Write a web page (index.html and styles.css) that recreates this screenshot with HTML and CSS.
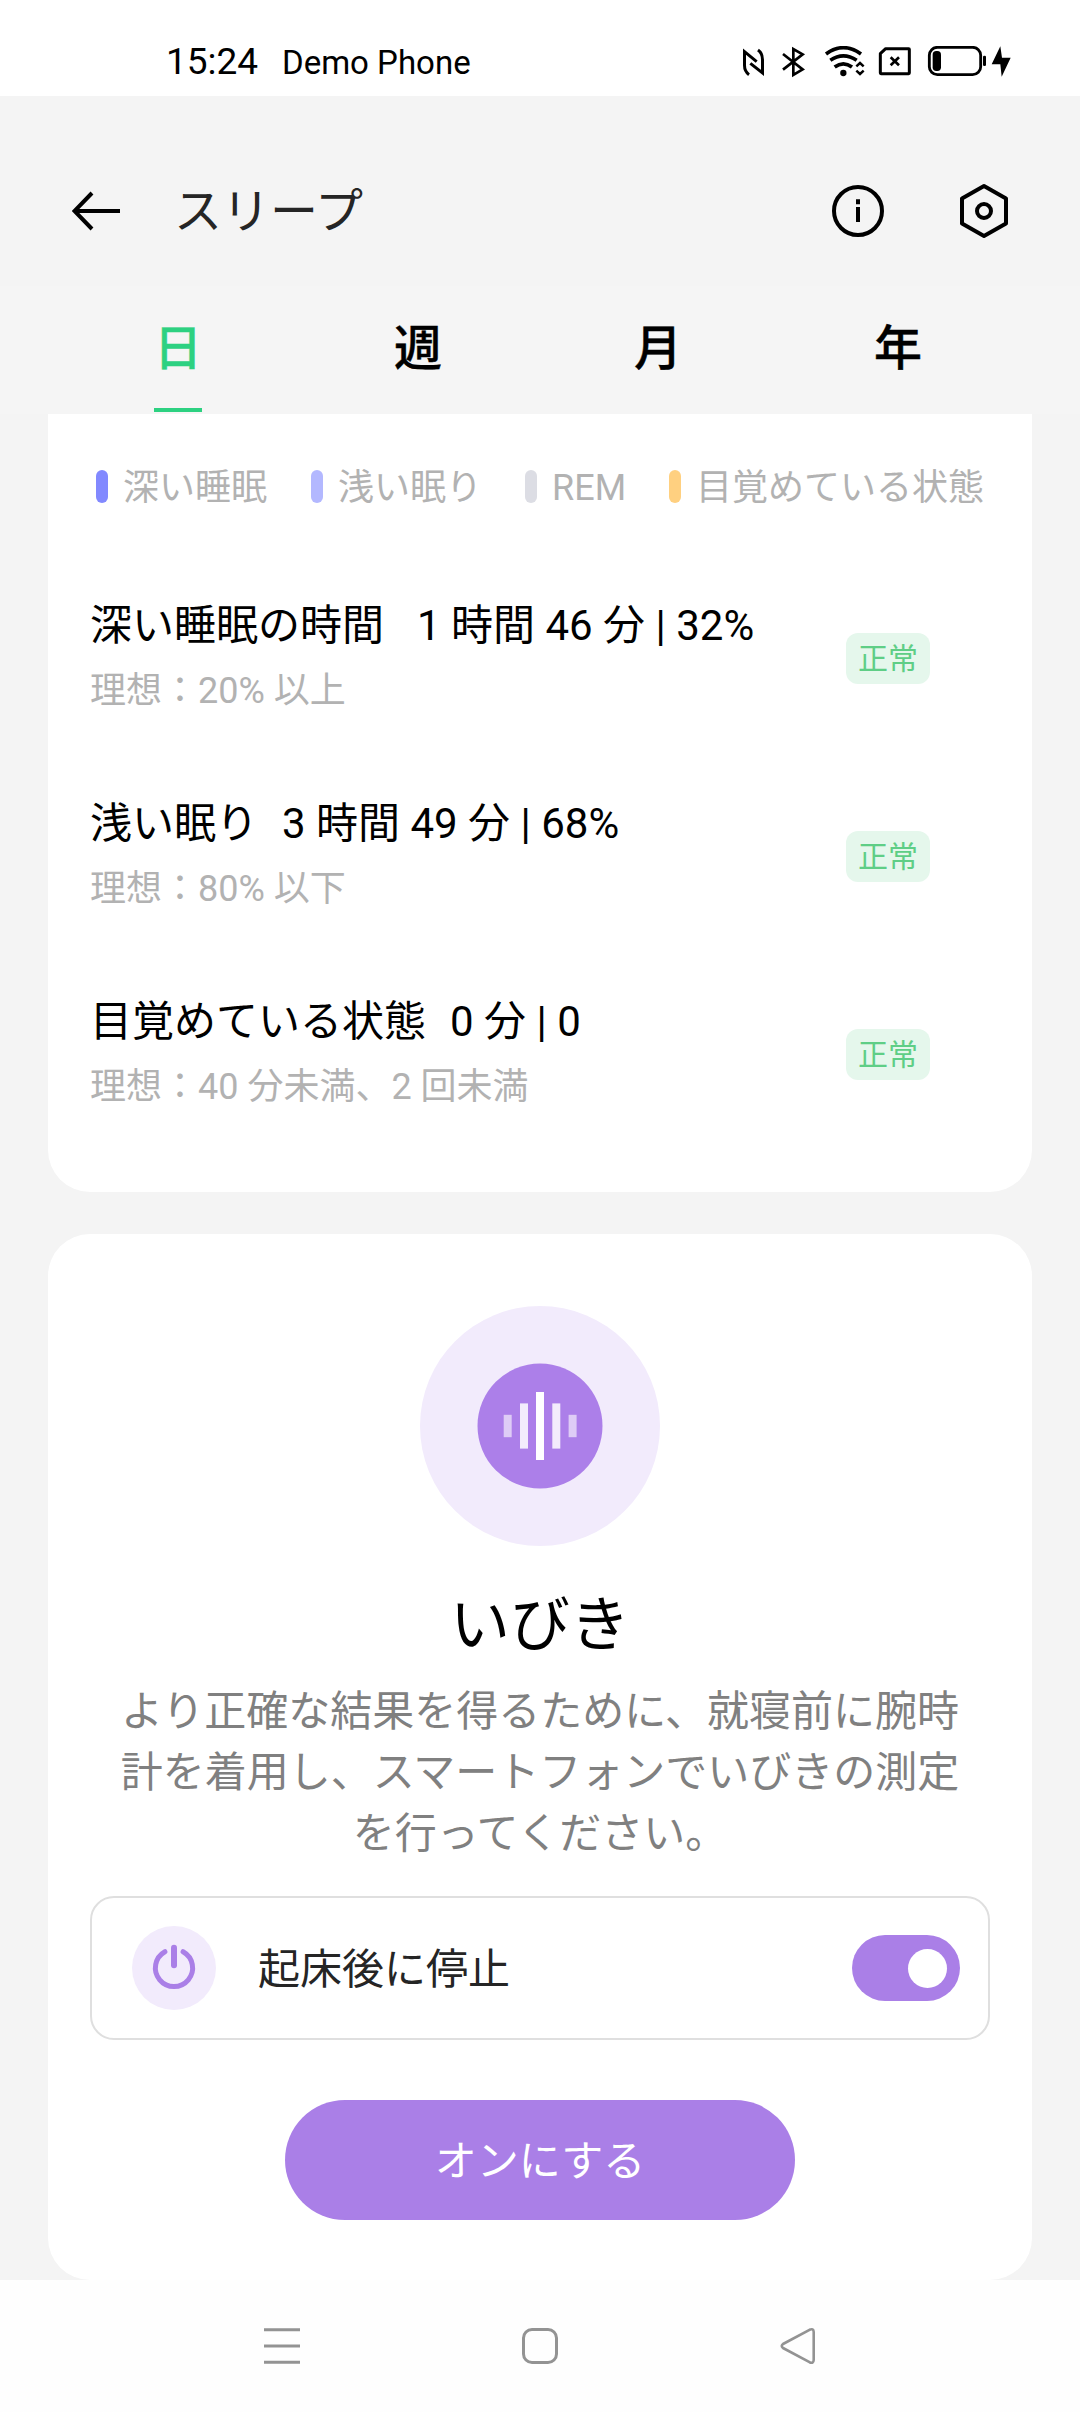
FILE: index.html
```html
<!DOCTYPE html>
<html lang="ja">
<head>
<meta charset="utf-8">
<title>スリープ</title>
<link rel="stylesheet" href="styles.css">
</head>
<body>
<div class="screen">
  <div class="status-bar">
    <span class="clock">15:24</span>
    <span class="carrier">Demo Phone</span>
    <div class="status-icons">
      <svg class="nfc" width="24" height="32" viewBox="66 78 72 96" fill="none" stroke="#000" stroke-width="9">
        <path d="M87 164C77 157 73.500 149 73.500 136V95L110 125"/>
        <path d="M114 90C124 97 127.500 106 127.500 119V159L91 130"/>
      </svg>
      <svg class="bluetooth" width="24" height="32" viewBox="186 78 72 96" fill="none" stroke="#000" stroke-width="8">
        <path d="M189 102L248 148L220 165V87L248 103L189 149"/>
      </svg>
      <svg class="wifi" width="42" height="32" viewBox="311 78 126 96" fill="none" stroke="#000" stroke-width="11">
        <path d="M317 102Q369 64 422 102M330 121Q369 94 409 121M343 141Q369 122 395 141"/>
        <circle cx="369" cy="159" r="9.500" fill="#000" stroke="none"/>
        <path stroke-width="7.500" d="M408 139L419 129L430 139M408 152L419 162L430 152"/>
      </svg>
      <svg class="sim" width="34" height="32" viewBox="475 78 102 96" fill="none" stroke="#000" stroke-width="9">
        <path stroke-linejoin="round" d="M498 86H567Q569 86 569 88V159Q569 161 567 161H484Q482 161 482 159V101Z"/>
        <path stroke-width="8" d="M513 112L538 136M538 112L513 136"/>
      </svg>
      <svg class="battery" width="86" height="32" viewBox="621 78 258 96">
        <rect x="628" y="82" width="154" height="82" rx="24" fill="none" stroke="#000" stroke-width="8.500"/>
        <rect x="638" y="93" width="25" height="60" rx="11"/>
        <rect x="789" y="107" width="9" height="31" rx="4"/>
        <path d="M841 79L815 133H841L845 170L872 113H846Z"/>
      </svg>
    </div>
  </div>

  <header class="app-bar">
    <svg width="48" height="48" viewBox="0 0 48 48" fill="none" stroke="#000" stroke-width="4"><path d="M48 24H3M20 6L2.500 24L20 42"/></svg>
    <h1 class="title">スリープ</h1>
    <svg width="56" height="56" viewBox="0 0 56 56" fill="none" stroke="#000" stroke-width="4">
      <circle cx="28" cy="28" r="24"/>
      <path d="M28 16.300V21.300M28 24V39"/>
    </svg>
    <svg class="settings" width="56" height="56" viewBox="0 0 56 56" fill="none" stroke="#000" stroke-width="4" stroke-linejoin="round">
      <path d="M28 3L50 15.500V40.500L28 53L6 40.500V15.500Z"/>
      <circle cx="28" cy="28" r="7"/>
    </svg>
  </header>

  <nav class="tabs">
    <span class="tab active">日</span>
    <span class="tab">週</span>
    <span class="tab">月</span>
    <span class="tab">年</span>
  </nav>

  <main class="content">
    <section class="card stages">
      <div class="legend">
        <span class="key deep"><span>深い睡眠</span></span>
        <span class="key light"><span>浅い眠り</span></span>
        <span class="key rem"><span>REM</span></span>
        <span class="key awake"><span>目覚めている状態</span></span>
      </div>
      <div class="row">
        <div class="info">
          <p class="measure wide"><span>深い睡眠の時間</span><span>1 時間 46 分 | 32%</span></p>
          <p class="ideal">理想：20% 以上</p>
        </div>
        <span class="badge">正常</span>
      </div>
      <div class="row">
        <div class="info">
          <p class="measure"><span>浅い眠り</span><span>3 時間 49 分 | 68%</span></p>
          <p class="ideal">理想：80% 以下</p>
        </div>
        <span class="badge">正常</span>
      </div>
      <div class="row">
        <div class="info">
          <p class="measure"><span>目覚めている状態</span><span>0 分 | 0</span></p>
          <p class="ideal">理想：40 分未満、2 回未満</p>
        </div>
        <span class="badge">正常</span>
      </div>
    </section>

    <section class="card snore">
      <svg width="240" height="240" viewBox="0 0 240 240">
        <circle cx="120" cy="120" r="120" fill="#f2ebfc"/>
        <circle cx="120" cy="120" r="62.500" fill="#ac7fe9"/>
        <g fill="#fff">
          <rect x="83.700" y="108.800" width="8" height="22.400" opacity=".6"/>
          <rect x="100" y="97.400" width="8" height="45.200" opacity=".85"/>
          <rect x="116" y="86" width="8" height="68"/>
          <rect x="132.300" y="97.400" width="8" height="45.200" opacity=".85"/>
          <rect x="148.600" y="108.800" width="8" height="22.400" opacity=".6"/>
        </g>
      </svg>
      <h2 class="snore-title">いびき</h2>
      <p class="snore-text">より正確な結果を得るために、就寝前に腕時計を着用し、スマートフォンでいびきの測定を行ってください。</p>
      <div class="option">
        <svg width="84" height="84" viewBox="0 0 84 84" fill="none" stroke="#aa7fe7" stroke-linecap="round">
          <circle cx="42" cy="42" r="42" fill="#f2ebfc" stroke="none"/>
          <path stroke-width="5" d="M32.900 25.700A18.600 18.600 0 1 0 51.100 25.700"/>
          <path stroke-width="6" d="M42 21.700V39.300"/>
        </svg>
        <span class="option-label">起床後に停止</span>
        <span class="toggle"><span class="knob"></span></span>
      </div>
      <button class="enable">オンにする</button>
    </section>
  </main>

  <div class="nav-bar">
    <svg width="42" height="42" viewBox="0 0 42 42" fill="none" stroke="#939393" stroke-width="3"><path d="M3 4.700H39M3 21H39M3 37.300H39"/></svg>
    <svg width="42" height="42" viewBox="0 0 42 42" fill="none" stroke="#939393" stroke-width="3"><rect x="4.500" y="4.500" width="33" height="33" rx="8.500"/></svg>
    <svg width="42" height="42" viewBox="0 0 42 42" fill="none" stroke="#939393" stroke-width="2.600" stroke-linejoin="round"><path d="M32.500 4.800Q36.500 3 36.700 7V35Q36.500 39 32.500 37.200L6 23Q3.500 21 6 19Z"/></svg>
  </div>
</div>
</body>
</html>
```
FILE: styles.css
```css
* { box-sizing: border-box; margin: 0; padding: 0; }

body {
  width: 1080px;
  background: #f4f4f4;
  color: #000;
  font-family: Roboto, "Noto Sans CJK JP", sans-serif;
}

svg { display: block; flex: none; }

.screen {
  display: flex;
  flex-direction: column;
  width: 1080px;
  height: 2412px;
  overflow: hidden;
}

.status-bar {
  display: flex;
  height: 96px;
  padding: 0 67px 0 166px;
  background: #fff;
}
.clock { width: 116px; font-size: 37px; line-height: 123px; }
.carrier { font-size: 33px; line-height: 126px; }
.status-icons { display: flex; margin-left: auto; padding-top: 46px; }
.bluetooth { margin-left: 16px; }
.wifi { margin-left: 17.700px; }
.sim { margin-left: 12.600px; }
.battery { margin-left: 14.700px; }

.app-bar {
  display: flex;
  align-items: center;
  height: 190px;
  padding: 40px 68px 0 72px;
}
.title {
  margin: 0 auto 0 54px;
  padding-top: 2px;
  color: #252525;
  font-size: 48px;
  font-weight: 400;
  line-height: 70px;
}
.settings { margin-left: 70px; }

.tabs {
  display: grid;
  grid-template-columns: repeat(4, 240px);
  height: 128px;
  padding: 0 58px 2px;
  background: #f5f5f5;
}
.tab {
  justify-self: center;
  width: 48px;
  height: 126px;
  border-bottom: 4px solid transparent;
  font-size: 48px;
  font-weight: 500;
  line-height: 125px;
  -webkit-text-stroke: 0.4px currentColor;
}
.tab.active { border-color: #2dd181; color: #2dd181; }

.content {
  display: flex;
  flex-direction: column;
  gap: 42px;
  padding: 0 48px;
}
.card { background: #fff; border-radius: 42px; }

.stages {
  height: 778px;
  padding: 46px 42px 0;
  border-top-left-radius: 0;
  border-top-right-radius: 0;
}
.legend {
  display: flex;
  gap: 43px;
  height: 52px;
  padding: 0 6px;
  margin-bottom: 70px;
  color: #b2b2b2;
  font-size: 36px;
  line-height: 52px;
}
.key { display: flex; align-items: center; gap: 15px; white-space: nowrap; }
.key.deep { margin-right: 1px; }
.key span { padding-top: 3px; }
.key::before { content: ""; width: 12px; height: 33px; border-radius: 6px; }
.deep::before { background: #8289ff; }
.light::before { background: #b3b8ff; }
.rem::before { background: #dcdde4; }
.awake::before { background: #ffd080; }

.row {
  display: flex;
  align-items: center;
  justify-content: space-between;
  height: 198px;
  padding: 0 60px 46px 0;
}
.info { margin-bottom: 9px; }
.measure { display: flex; gap: 24px; font-size: 42px; line-height: 74px; white-space: pre; }
.measure.wide { gap: 33px; }
.ideal { color: #b2b2b2; font-size: 36px; line-height: 56px; }
.badge {
  width: 84px;
  height: 51px;
  border-radius: 12px;
  background: #e5f7ec;
  color: #5fce86;
  font-size: 30px;
  line-height: 51px;
  text-align: center;
}

.snore {
  display: flex;
  flex-direction: column;
  align-items: center;
  height: 1046px;
  padding: 72px 42px 0;
}
.snore-title { margin-top: 36px; font-size: 60px; font-weight: 400; line-height: 87px; }
.snore-text {
  width: 840px;
  margin-top: 13px;
  color: #808080;
  font-size: 42px;
  line-height: 60.800px;
  text-align: center;
}
.option {
  display: flex;
  align-items: center;
  width: 900px;
  height: 144px;
  margin-top: 32px;
  padding: 0 28px 0 40px;
  border: 2px solid #dfdfdf;
  border-radius: 24px;
}
.option-label { margin-left: 42px; padding-top: 3px; color: #252525; font-size: 42px; line-height: 60px; }
.toggle {
  display: flex;
  align-items: center;
  justify-content: flex-end;
  width: 108px;
  height: 66px;
  margin-left: auto;
  padding-right: 13px;
  border-radius: 33px;
  background: #aa7fe7;
}
.knob { width: 39px; height: 39px; border-radius: 50%; background: #fff; }
.enable {
  width: 510px;
  height: 120px;
  margin-top: 60px;
  padding-top: 3px;
  border: 0;
  border-radius: 60px;
  background: #aa7fe7;
  color: #fff;
  font: 42px/60px Roboto, "Noto Sans CJK JP", sans-serif;
}

.nav-bar {
  display: flex;
  align-items: center;
  justify-content: space-between;
  height: 132px;
  padding: 0 261px;
  background: #fefefe;
}
```
